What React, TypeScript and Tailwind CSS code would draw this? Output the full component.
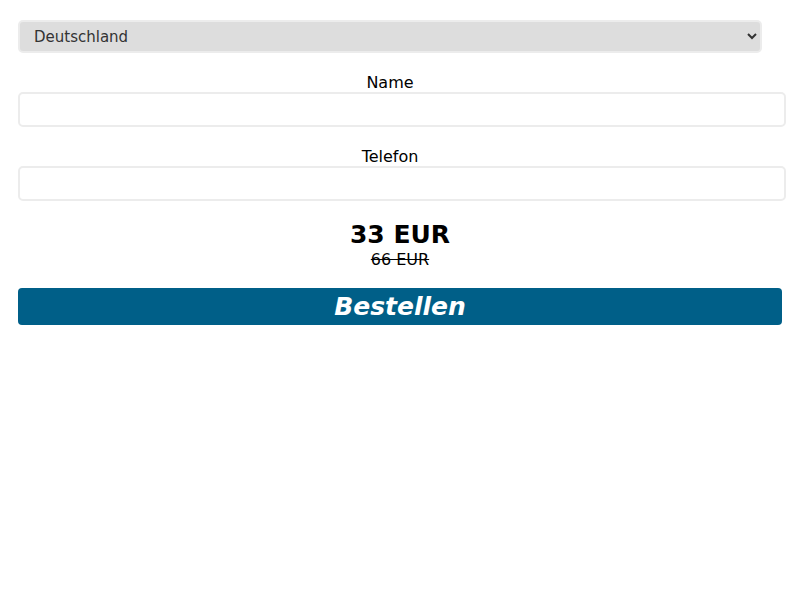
import React from 'react';

export default function App() {
  return (
    <div className="min-h-[600px] bg-white font-['DejaVu_Sans',sans-serif] text-black">
      <div className="pt-[20px] pl-[18px]">
        <select
          defaultValue="de"
          className="block h-[33px] w-[744px] rounded-[5px] border-2 border-[#ececec] bg-[#dddddd] pl-[10px] pr-[4px] font-['DejaVu_Sans',sans-serif] text-[15px] text-[#333333] outline-none"
        >
          <option value="de">Deutschland</option>
        </select>
      </div>

      <div className="w-[780px] pt-[20px] text-center text-[16px] leading-[19px]">Name</div>
      <div className="pl-[18px]">
        <input className="block h-[35px] w-[768px] rounded-[5px] border-2 border-[#ececec] bg-white px-3 text-[15px] outline-none" />
      </div>

      <div className="w-[780px] pt-[20px] text-center text-[16px] leading-[19px]">Telefon</div>
      <div className="pl-[18px]">
        <input className="block h-[35px] w-[768px] rounded-[5px] border-2 border-[#ececec] bg-white px-3 text-[15px] outline-none" />
      </div>

      <div className="pt-[19px] text-center">
        <div className="text-[25px] font-bold leading-[30px]">33 EUR</div>
        <div className="text-[16px] leading-[19px] line-through">66 EUR</div>
      </div>

      <div className="pt-[19px] pl-[18px]">
        <button className="flex h-[37px] w-[764px] items-center justify-center rounded-[4px] bg-[#005f88] text-[25px] font-bold italic text-white">
          Bestellen
        </button>
      </div>
    </div>
  );
}
